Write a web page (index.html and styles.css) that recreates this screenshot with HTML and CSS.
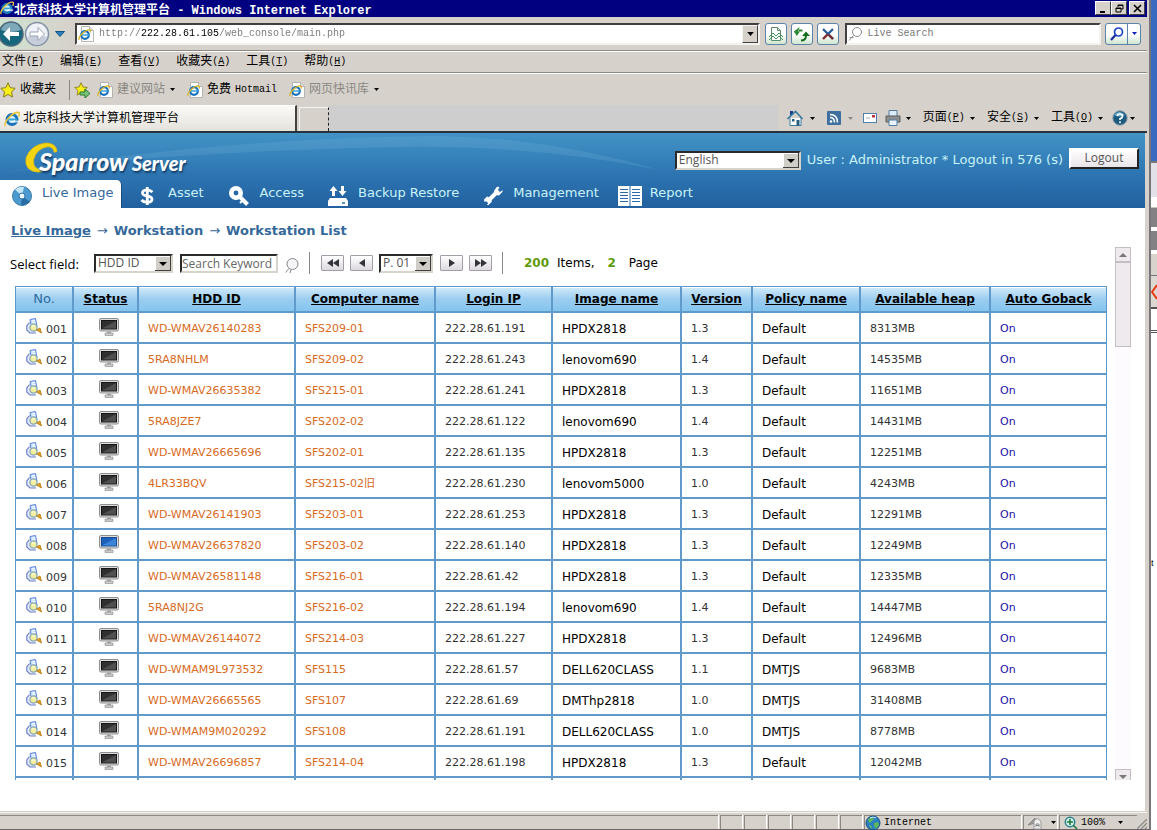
FILE: index.html
```html
<!DOCTYPE html>
<html lang="zh-CN">
<head>
<meta charset="utf-8">
<title>北京科技大学计算机管理平台 - Windows Internet Explorer</title>
<link rel="stylesheet" href="styles.css">
</head>
<body>
<svg class="defs" aria-hidden="true">
  <symbol id="ie" viewBox="0 0 16 16"><circle cx="8" cy="8.500" r="5" fill="#d8f0fa" stroke="#1873b8" stroke-width="3"/><path d="M4 8.500h9" stroke="#39a3dc" stroke-width="2"/><path d="M9 11.500h6v-2h-6z" fill="#fff" opacity=".7"/><path d="M1.500 15C-1 12 9 0 15 1.500c1 1 .5 2.500-.5 4" fill="none" stroke="#e8c63c" stroke-width="1.600"/></symbol>
  <symbol id="iepage" viewBox="0 0 16 16"><path d="M3.500.5h8l4 4v11h-12z" fill="#fff" stroke="#b4b4b4"/><path d="M11.500.5v4h4" fill="#ddd" stroke="#b4b4b4"/><circle cx="7" cy="9" r="3.800" fill="none" stroke="#1873b8" stroke-width="2.200"/><path d="M4 9h7" stroke="#39a3dc" stroke-width="1.500"/><path d="M1 14C0 11 7 3 12 4c.8.6.5 1.500 0 2.500" fill="none" stroke="#d9b52a" stroke-width="1.300"/></symbol>
  <symbol id="caret" viewBox="0 0 5 3"><path d="M0 0h5L2.500 3z" fill="currentColor"/></symbol>
  <symbol id="star" viewBox="0 0 16 16"><path d="M8 .8l2.200 4.900 5 .6-3.700 3.500 1 5.200L8 12.400 3.500 15l1-5.200L.8 6.300l5-.6z" fill="#f7ee1c" stroke="#8a7d16"/></symbol>
  <symbol id="card" viewBox="0 0 16 16"><path d="M4 1.500L9.500.5l1.500 8-5.500 1.500z" fill="#c4e2ff" stroke="#5b82e0"/><path d="M6 3l3-.6M6.300 5l3-.6" stroke="#fff"/><path d="M3.500 4.500L.8 8v4l3.200 3h6" fill="#e6ecfa" stroke="#6c7fc8" stroke-width="1.200"/><circle cx="7.500" cy="9.500" r="3.600" fill="#f3ee9a" stroke="#86a8b8" stroke-width="1.300"/><path d="M6 8.500q1.500-1.500 3 0" fill="none" stroke="#fff"/><path d="M10.500 12l3.500-2 1.500 5z" fill="#e2a024" stroke="#b0780e" stroke-width=".8"/></symbol>
  <symbol id="pc" viewBox="0 0 20 18"><rect x=".5" y=".5" width="19" height="12.500" rx="1.500" fill="#dedede" stroke="#8e8e8e"/><rect x="2.500" y="2.500" width="15" height="8.500" fill="#303030" stroke="#161616"/><path d="M3 10.500l14-7.500v7.500z" fill="#505050"/><path d="M8 13.500h4v2H8z" fill="#a5a5a5"/><path d="M6 15h8v2.500H6z" fill="#c9c9c9" stroke="#8a8a8a" stroke-width=".6"/></symbol>
  <symbol id="pcon" viewBox="0 0 20 18"><rect x=".5" y=".5" width="19" height="12.500" rx="1.500" fill="#dedede" stroke="#8e8e8e"/><rect x="2.500" y="2.500" width="15" height="8.500" fill="#1f62ba" stroke="#174a92"/><path d="M3 10.500l14-7.500v7.500z" fill="#3b86d9"/><path d="M8 13.500h4v2H8z" fill="#a5a5a5"/><path d="M6 15h8v2.500H6z" fill="#c9c9c9" stroke="#8a8a8a" stroke-width=".6"/></symbol>
  <symbol id="globe" viewBox="0 0 16 16"><circle cx="8" cy="8" r="7" fill="#2b7fc2" stroke="#17507f"/><path d="M3 4l4-2 2 2-3 3-2 1zM9 8l4-1 1 3-3 4-2-3zM4 10l3 1-1 3z" fill="#5cb85a"/><path d="M5 3q3-2 6 0" stroke="#bfe3fa" fill="none"/></symbol>
</svg>
<div class="desktop">
<div class="window">
  <div class="titlebar">
    <svg class="ic14"><use href="#ie"/></svg>
    <h1 class="title">北京科技大学计算机管理平台<span class="title-app"> - Windows Internet Explorer</span></h1>
    <div class="winbtns">
      <button aria-label="最小化"><svg viewBox="0 0 9 9"><path d="M1 8h5" stroke="#000" stroke-width="2"/></svg></button>
      <button aria-label="还原"><svg viewBox="0 0 9 9"><path d="M3 3V1h5v4H6M3 1.500h5M1 4h5v4H1zM1 4.500h5" fill="none" stroke="#000"/></svg></button>
      <button aria-label="关闭" class="close"><svg viewBox="0 0 9 9"><path d="M1 1l7 7M8 1L1 8" stroke="#000" stroke-width="1.600"/></svg></button>
    </div>
  </div>

  <div class="addressrow">
    <div class="history">
      <button aria-label="后退"><svg class="ic26" viewBox="0 0 26 26"><circle cx="13" cy="13" r="12" fill="#14677d" stroke="#50697c" stroke-width="1.500"/><path d="M3 9a10.500 10.500 0 0 1 20 0q-10 4-20 0z" fill="#7fa9b8"/><path d="M12 6l-7 7 7 7v-5h9v-4h-9z" fill="#fff"/></svg></button>
      <button aria-label="前进"><svg class="ic26" viewBox="0 0 26 26"><circle cx="13" cy="13" r="11.500" fill="#eef1f5" stroke="#8492a6" stroke-width="1.500"/><path d="M3 16q10-4 20 0-3 8-10 8T3 16z" fill="#c6cedb"/><path d="M14 6.500l6.500 6.500-6.500 6.500V15H6v-4h8z" fill="#fff" stroke="#98a4b8"/></svg></button>
      <button aria-label="最近的页面"><svg class="recent" viewBox="0 0 10 6"><path d="M.5.500h9L5 5.500z" fill="#2a7fc0" stroke="#155380"/></svg></button>
    </div>
    <div class="address">
      <svg class="ic16"><use href="#iepage"/></svg>
      <input class="url" aria-label="地址" value="http://222.28.61.105/web_console/main.php">
      <button class="dropbtn" aria-label="显示地址列表"><svg class="dropmark"><use href="#caret"/></svg></button>
    </div>
    <button class="toolbtn" aria-label="兼容性视图"><svg class="ic16" viewBox="0 0 16 16"><path d="M3.500 1.500h6l3 3v10h-9z" fill="#fff" stroke="#5e8b68"/><path d="M9.500 1.500v3h3" fill="none" stroke="#5e8b68"/><path d="M1 11l4-4 3 3 3-3 4 4M1 14l4-4 3 3 3-3 4 4" fill="none" stroke="#47915a"/></svg></button>
    <button class="toolbtn" aria-label="刷新"><svg class="ic16" viewBox="0 0 16 16"><path d="M5 4.500h3.500" stroke="#2b8a32" stroke-width="2"/><path d="M5.500 1L3 10 0 5.500z" fill="#2b8a32"/><path d="M0 5.500h6L3 9.500z" fill="#2b8a32"/><path d="M7 14.500q5 0 5-5" fill="none" stroke="#176e1e" stroke-width="2"/><path d="M8 10h8l-4-4.500z" fill="#176e1e"/></svg></button>
    <button class="toolbtn" aria-label="停止"><svg class="ic16" viewBox="0 0 16 16"><path d="M3 3l10 10" stroke="#28609a" stroke-width="2.400"/><path d="M13 3L8 8" stroke="#28609a" stroke-width="2.400"/><path d="M8 8l-5 5M9 9l4 4" stroke="#7e2a2e" stroke-width="2.400"/></svg></button>
    <div class="search">
      <svg class="ic16" viewBox="0 0 16 16"><circle cx="10" cy="6" r="4.500" fill="none" stroke="#8c8c8c"/><path d="M6.500 9.500L2 14.500M2.500 11.500h4" stroke="#8c8c8c"/></svg>
      <input class="searchbox" aria-label="Live Search" placeholder="Live Search">
    </div>
    <div class="searchgo">
      <button aria-label="搜索"><svg class="ic16" viewBox="0 0 16 16"><circle cx="9.500" cy="6" r="4" fill="#fff" stroke="#1d46c8" stroke-width="1.700"/><path d="M6.500 9L2 14" stroke="#1a2f9c" stroke-width="2.200"/></svg></button>
      <button aria-label="搜索选项"><svg class="caret blue"><use href="#caret"/></svg></button>
    </div>
  </div>

  <nav class="menubar" aria-label="菜单">
    <button>文件<span>(<u>F</u>)</span></button><button>编辑<span>(<u>E</u>)</span></button><button>查看<span>(<u>V</u>)</span></button><button>收藏夹<span>(<u>A</u>)</span></button><button>工具<span>(<u>T</u>)</span></button><button>帮助<span>(<u>H</u>)</span></button>
  </nav>

  <div class="favbar">
    <button class="fav first"><svg class="ic16"><use href="#star"/></svg>收藏夹</button>
    <button class="addfav" aria-label="添加到收藏夹栏"><svg class="ic16" viewBox="0 0 16 16"><use href="#star" width="14" height="14"/><path d="M6 10h5V7l5 4.500L11 16v-3H6z" fill="#7cc47a" stroke="#257a30"/></svg></button>
    <a class="fav dim" href="#"><svg class="ic16"><use href="#iepage"/></svg>建议网站<svg class="caret"><use href="#caret"/></svg></a>
    <a class="fav" href="#"><svg class="ic16"><use href="#iepage"/></svg>免费 <span>Hotmail</span></a>
    <a class="fav dim" href="#"><svg class="ic16"><use href="#iepage"/></svg>网页快讯库<svg class="caret"><use href="#caret"/></svg></a>
  </div>

  <div class="tabrow">
    <div class="tab"><svg class="ic16"><use href="#ie"/></svg>北京科技大学计算机管理平台</div>
    <button class="newtab" aria-label="新选项卡"></button>
    <div class="tabfill"></div>
    <div class="commands">
      <button aria-label="主页"><svg class="ic16" viewBox="0 0 16 16"><path d="M3 8v7.500h11V8" fill="#fff" stroke="#3b7ba0"/><path d="M3 1h3v4H3z" fill="#1a3a90"/><path d="M.5 9L8.500 1.500 15.500 9" fill="none" stroke="#3b7ba0" stroke-width="1.600"/><path d="M9.500 10h3v5.500h-3z" fill="#2a5e80"/><path d="M5 9h2.500v2.500H5z" fill="#2a5e80"/></svg><svg class="caret"><use href="#caret"/></svg></button>
      <button class="off" aria-label="源"><svg class="ic14" viewBox="0 0 14 14"><rect width="14" height="14" rx="1" fill="#3f6f9e"/><circle cx="4" cy="10.500" r="1.300" fill="#fff"/><path d="M3 6.500q4.500 0 4.500 5M3 3.500q7.500 0 7.500 8" fill="none" stroke="#fff" stroke-width="1.500"/></svg><svg class="caret"><use href="#caret"/></svg></button>
      <button aria-label="阅读邮件"><svg class="ic14" viewBox="0 0 14 14"><rect x=".5" y="2.500" width="13" height="9" fill="#fff" stroke="#4e7fa8"/><path d="M9 4h3v2.500H9z" fill="#b83245"/><path d="M3 7h4" stroke="#aaa"/></svg></button>
      <button aria-label="打印"><svg class="ic16" viewBox="0 0 16 16"><path d="M4 .5h8V7H4z" fill="#d9ecfa" stroke="#587a9a"/><path d="M1 6h14v6H1z" fill="#8e8e8e" stroke="#5a5a5a"/><path d="M4 10h8v5.500H4z" fill="#eef6fc" stroke="#4e7fa8"/></svg><svg class="caret"><use href="#caret"/></svg></button>
      <button>页面<span>(<u>P</u>)</span><svg class="caret"><use href="#caret"/></svg></button>
      <button>安全<span>(<u>S</u>)</span><svg class="caret"><use href="#caret"/></svg></button>
      <button>工具<span>(<u>O</u>)</span><svg class="caret"><use href="#caret"/></svg></button>
      <button class="help" aria-label="帮助"><svg class="ic16" viewBox="0 0 16 16"><circle cx="8" cy="8" r="7.200" fill="#1c5a80" stroke="#8a9aa5"/><path d="M2 5q5-6 11 0-5 3-11 0z" fill="#6fb0d0"/><path d="M5.500 6Q5.500 4 8 4t2.500 2.200Q10.500 8 8 8.800V10" fill="none" stroke="#fff" stroke-width="1.600"/><circle cx="8" cy="12.200" r="1" fill="#fff"/></svg><svg class="caret"><use href="#caret"/></svg></button>
    </div>
  </div>

  <div class="page">
    <header class="banner">
      <svg class="swoosh" viewBox="0 0 1145 75" preserveAspectRatio="none" aria-hidden="true"><path d="M0 40Q230 4 440 3q110 2 220 34Q540 12 400 14 180 18 0 40z" fill="#8cc8e8" opacity=".16"/></svg>
      <div class="brandrow">
        <div class="logo">
          <svg class="moon" viewBox="0 0 36 34" aria-hidden="true"><path d="M34 10Q33 1 22 1 6 3 1 17q-2 14 13 15 4 0 7-2Q8 30 9 19 12 7 24 5q6 0 7 6z" fill="#f5d512" stroke="#e0b610" stroke-width=".8"/></svg>
          <span class="logo-a">Sparrow</span><span class="logo-b">Server</span>
        </div>
        <div class="session">
          <select class="lang" aria-label="Language"><option>English</option></select>
          <span>User : Administrator * Logout in 576 (s)</span>
          <button class="logout">Logout</button>
        </div>
      </div>
      <nav class="mainnav" aria-label="Main">
        <a class="on" href="#"><svg class="ic20" viewBox="0 0 20 20"><circle cx="10" cy="10" r="9.500" fill="#4b9bd0" stroke="#3d7cab"/><path d="M10 10L3 3.500Q7 0 12 1z" fill="#c5e6f7"/><path d="M10 10l8 6q-4 4-9 3z" fill="#2a6ca6"/><circle cx="10" cy="10" r="3" fill="#e9f6fd" stroke="#2f75aa"/></svg>Live Image</a>
        <a class="n2" href="#"><svg class="ic20" viewBox="0 0 20 20"><path d="M15.500 6Q13 3.800 10 3.800 5.500 4 5.500 7q0 2.300 4.700 3 4.800.8 4.800 3.300 0 3-5 3-3.500 0-5.500-2.300M10.300 1v18" fill="none" stroke="#fff" stroke-width="2.800"/></svg>Asset</a>
        <a class="n3" href="#"><svg class="ic20" viewBox="0 0 20 20"><circle cx="7" cy="7" r="4.700" fill="none" stroke="#fff" stroke-width="4.600"/><path d="M10 10l8.500 8.500" stroke="#fff" stroke-width="4"/><path d="M13 15l-2 2" stroke="#fff" stroke-width="2"/></svg>Access</a>
        <a class="n4" href="#"><svg class="ic20" viewBox="0 0 20 20"><path d="M5.500 0l4 5h-2.500v5H4V5H1.500zM14.500 10l4-5H16V0h-3v5h-2.500z" fill="#fff"/><path d="M2 12h16l2 3v5H0v-5z" fill="#fff"/><path d="M14 17h3" stroke="#2b6aab" stroke-width="1.500"/></svg>Backup Restore</a>
        <a class="n5" href="#"><svg class="ic20" viewBox="0 0 20 20"><path d="M4 16L15.500 4.500" stroke="#fff" stroke-width="4"/><path d="M14 .8l-3 4 1 4 4 .6 3.500-3.600V4l-3 2.500-2-1.500L16.500 1zM1 13.500L4 10.500l4 1.500.8 3.800L5.500 19H3.700l2.500-2.800-1.400-1.700L1.500 16z" fill="#fff"/></svg>Management</a>
        <a class="n6" href="#"><svg class="ic24" viewBox="0 0 24 20"><path d="M0 0h24v20H0z" fill="#fff"/><path d="M12 0v20M2 3.500h8M2 6.500h8M2 9.500h8M2 12.500h8M2 15.500h8M14 3.500h8M14 6.500h8M14 9.500h8M14 12.500h8M14 15.500h8" stroke="#2b6aab"/></svg>Report</a>
      </nav>
    </header>

    <nav class="crumbs" aria-label="Breadcrumb"><a href="#">Live Image</a><i>→</i><span>Workstation</span><i>→</i><span>Workstation List</span></nav>

    <div class="scroller">
      <main class="pane">
        <form class="filter">
          <label for="field">Select field:</label>
          <select id="field" class="field"><option>HDD ID</option></select>
          <input class="keyword" aria-label="Search Keyword" placeholder="Search Keyword">
          <button type="button" class="find" aria-label="Search"><svg class="ic16" viewBox="0 0 16 16"><circle cx="8.500" cy="7" r="5.500" fill="#f5f5f8" stroke="#85858d"/><path d="M5 11.500L1.500 15.500M7 13l-1 3" stroke="#85858d"/></svg></button>
          <span class="rule"></span>
          <button type="button" class="pg" aria-label="First page"><svg viewBox="0 0 12 8"><path d="M6 0v8L0 4zM12 0v8L6 4z"/></svg></button>
          <button type="button" class="pg" aria-label="Previous page"><svg viewBox="0 0 12 8"><path d="M9 0v8L3 4z"/></svg></button>
          <select class="pageno" aria-label="Page number"><option>P. 01</option></select>
          <button type="button" class="pg" aria-label="Next page"><svg viewBox="0 0 12 8"><path d="M3 0v8l6-4z"/></svg></button>
          <button type="button" class="pg" aria-label="Last page"><svg viewBox="0 0 12 8"><path d="M0 0v8l6-4zM6 0v8l6-4z"/></svg></button>
          <span class="rule"></span>
          <span class="totals"><b>200</b><span>Items,</span><b>2</b><span>Page</span></span>
        </form>
        <table class="grid">
          <colgroup><col class="c1"><col class="c2"><col class="c3"><col class="c4"><col class="c5"><col class="c6"><col class="c7"><col class="c8"><col class="c9"><col class="c10"></colgroup>
          <thead><tr><th class="no">No.</th><th><a href="#">Status</a></th><th><a href="#">HDD ID</a></th><th><a href="#">Computer name</a></th><th><a href="#">Login IP</a></th><th><a href="#">Image name</a></th><th><a href="#">Version</a></th><th><a href="#">Policy name</a></th><th><a href="#">Available heap</a></th><th><a href="#">Auto Goback</a></th></tr></thead>
          <tbody>
          <tr><td><svg><use href="#card"/></svg>001</td><td><svg><use href="#pc"/></svg></td><td><a href="#">WD-WMAV26140283</a></td><td><a href="#">SFS209-01</a></td><td>222.28.61.191</td><td>HPDX2818</td><td>1.3</td><td>Default</td><td>8313MB</td><td>On</td></tr>
          <tr><td><svg><use href="#card"/></svg>002</td><td><svg><use href="#pc"/></svg></td><td><a href="#">5RA8NHLM</a></td><td><a href="#">SFS209-02</a></td><td>222.28.61.243</td><td>lenovom690</td><td>1.4</td><td>Default</td><td>14535MB</td><td>On</td></tr>
          <tr><td><svg><use href="#card"/></svg>003</td><td><svg><use href="#pc"/></svg></td><td><a href="#">WD-WMAV26635382</a></td><td><a href="#">SFS215-01</a></td><td>222.28.61.241</td><td>HPDX2818</td><td>1.3</td><td>Default</td><td>11651MB</td><td>On</td></tr>
          <tr><td><svg><use href="#card"/></svg>004</td><td><svg><use href="#pc"/></svg></td><td><a href="#">5RA8JZE7</a></td><td><a href="#">SFS202-02</a></td><td>222.28.61.122</td><td>lenovom690</td><td>1.4</td><td>Default</td><td>14431MB</td><td>On</td></tr>
          <tr><td><svg><use href="#card"/></svg>005</td><td><svg><use href="#pc"/></svg></td><td><a href="#">WD-WMAV26665696</a></td><td><a href="#">SFS202-01</a></td><td>222.28.61.135</td><td>HPDX2818</td><td>1.3</td><td>Default</td><td>12251MB</td><td>On</td></tr>
          <tr><td><svg><use href="#card"/></svg>006</td><td><svg><use href="#pc"/></svg></td><td><a href="#">4LR33BQV</a></td><td><a href="#">SFS215-02旧</a></td><td>222.28.61.230</td><td>lenovom5000</td><td>1.0</td><td>Default</td><td>4243MB</td><td>On</td></tr>
          <tr><td><svg><use href="#card"/></svg>007</td><td><svg><use href="#pc"/></svg></td><td><a href="#">WD-WMAV26141903</a></td><td><a href="#">SFS203-01</a></td><td>222.28.61.253</td><td>HPDX2818</td><td>1.3</td><td>Default</td><td>12291MB</td><td>On</td></tr>
          <tr><td><svg><use href="#card"/></svg>008</td><td><svg><use href="#pcon"/></svg></td><td><a href="#">WD-WMAV26637820</a></td><td><a href="#">SFS203-02</a></td><td>222.28.61.140</td><td>HPDX2818</td><td>1.3</td><td>Default</td><td>12249MB</td><td>On</td></tr>
          <tr><td><svg><use href="#card"/></svg>009</td><td><svg><use href="#pc"/></svg></td><td><a href="#">WD-WMAV26581148</a></td><td><a href="#">SFS216-01</a></td><td>222.28.61.42</td><td>HPDX2818</td><td>1.3</td><td>Default</td><td>12335MB</td><td>On</td></tr>
          <tr><td><svg><use href="#card"/></svg>010</td><td><svg><use href="#pc"/></svg></td><td><a href="#">5RA8NJ2G</a></td><td><a href="#">SFS216-02</a></td><td>222.28.61.194</td><td>lenovom690</td><td>1.4</td><td>Default</td><td>14447MB</td><td>On</td></tr>
          <tr><td><svg><use href="#card"/></svg>011</td><td><svg><use href="#pc"/></svg></td><td><a href="#">WD-WMAV26144072</a></td><td><a href="#">SFS214-03</a></td><td>222.28.61.227</td><td>HPDX2818</td><td>1.3</td><td>Default</td><td>12496MB</td><td>On</td></tr>
          <tr><td><svg><use href="#card"/></svg>012</td><td><svg><use href="#pc"/></svg></td><td><a href="#">WD-WMAM9L973532</a></td><td><a href="#">SFS115</a></td><td>222.28.61.57</td><td>DELL620CLASS</td><td>1.1</td><td>DMTJS</td><td>9683MB</td><td>On</td></tr>
          <tr><td><svg><use href="#card"/></svg>013</td><td><svg><use href="#pc"/></svg></td><td><a href="#">WD-WMAV26665565</a></td><td><a href="#">SFS107</a></td><td>222.28.61.69</td><td>DMThp2818</td><td>1.0</td><td>DMTJS</td><td>31408MB</td><td>On</td></tr>
          <tr><td><svg><use href="#card"/></svg>014</td><td><svg><use href="#pc"/></svg></td><td><a href="#">WD-WMAM9M020292</a></td><td><a href="#">SFS108</a></td><td>222.28.61.191</td><td>DELL620CLASS</td><td>1.0</td><td>DMTJS</td><td>8778MB</td><td>On</td></tr>
          <tr><td><svg><use href="#card"/></svg>015</td><td><svg><use href="#pc"/></svg></td><td><a href="#">WD-WMAV26696857</a></td><td><a href="#">SFS214-04</a></td><td>222.28.61.198</td><td>HPDX2818</td><td>1.3</td><td>Default</td><td>12042MB</td><td>On</td></tr>
          <tr aria-hidden="true"><td></td><td></td><td></td><td></td><td></td><td></td><td></td><td></td><td></td><td></td></tr>
          </tbody>
        </table>
      </main>
      <div class="vbar">
        <button aria-label="Scroll up"><svg viewBox="0 0 8 4"><path d="M0 4h8L4 0z" fill="#777"/></svg></button>
        <div class="thumb"></div>
        <div class="track"></div>
        <button aria-label="Scroll down"><svg viewBox="0 0 8 4"><path d="M0 0h8L4 4z" fill="#777"/></svg></button>
      </div>
    </div>
  </div>

  <footer class="status">
    <div class="cell grow"></div><div class="cell"></div><div class="cell"></div><div class="cell"></div><div class="cell"></div><div class="cell"></div><div class="cell"></div>
    <div class="cell zone"><svg class="ic16"><use href="#globe"/></svg>Internet</div>
    <div class="cell guard"><svg class="ic16" viewBox="0 0 16 16"><path d="M1 10l7-7v5z" fill="#999" stroke="#888"/><path d="M7 6q4-5 7 1v7H7z" fill="#f0f0f0" stroke="#999"/><path d="M9 12V9h3v3M9 10.500h3" fill="none" stroke="#888"/></svg><svg class="caret"><use href="#caret"/></svg></div>
    <div class="cell zoom"><svg class="ic14" viewBox="0 0 14 14"><circle cx="6" cy="6" r="4.700" fill="#d9f2ee" stroke="#26808a" stroke-width="1.500"/><path d="M6 3v6M3 6h6M9.500 9.500l3.500 3.500" stroke="#187a3c" stroke-width="1.600"/></svg><span>100%</span><svg class="caret"><use href="#caret"/></svg></div>
    <svg class="grip" viewBox="0 0 10 10"><path d="M0 10L10 0M4 10l6-6M8 10l2-2" stroke="#8a8a86" stroke-width="1.300"/></svg>
  </footer>
</div>
<div class="behind" aria-hidden="true">
  <div class="b1"></div><div class="b2"></div><div class="b3"></div><div class="b3"></div><div class="b4"></div>
  <div class="b5"><svg viewBox="0 0 6 16"><path d="M6 1L1 8l5 7" fill="none" stroke="#e8380c" stroke-width="2"/></svg></div>
  <div class="b6"></div><div class="b7">t</div>
</div>
</div>
</body>
</html>
```
FILE: styles.css
```css
* { box-sizing: border-box; }
body { margin: 0; font: 12px/16px "Liberation Mono", "Noto Sans CJK SC", monospace; color: #000; }
button, a { font: inherit; color: inherit; }
button { border: 0; padding: 0; background: none; display: flex; align-items: center; justify-content: center; }
a { text-decoration: none; }
svg { flex: none; display: block; }
.defs { position: absolute; width: 0; height: 0; }
.ic14 { width: 14px; height: 14px; }
.ic16 { width: 16px; height: 16px; }
.ic20 { width: 20px; height: 20px; }
.ic24 { width: 24px; height: 20px; }
.ic26 { width: 26px; height: 26px; }
.caret { width: 5px; height: 3px; }
.dropmark { width: 7px; height: 4px; }
.blue { color: #0a1fc0; }

.desktop { display: flex; height: 100vh; overflow: hidden; }
.window { flex: 1; min-width: 0; display: flex; flex-direction: column; background: #d6d2cb; padding-right: 2px; border-right: 2px solid #77757a; border-bottom: 1px solid #6c6468; }

/* Browser chrome */
.titlebar { display: flex; align-items: flex-start; height: 17px; background: #000080; color: #fff; padding-right: 2px; }
.title { flex: 1; margin: 0; font: bold 12px/18px "Noto Sans CJK SC", sans-serif; white-space: pre; }
.title-app { font-family: "Liberation Mono", monospace; }
.titlebar svg { margin-top: 1px; }
.winbtns { display: flex; margin-top: 1px; }
.winbtns button { width: 16px; height: 14px; background: #d6d2cb; border: 1px solid; border-color: #fff #404040 #404040 #fff; }
.winbtns .close { margin-left: 2px; }
.winbtns svg { width: 9px; height: 9px; margin: 0; }

.addressrow { display: flex; align-items: center; gap: 4px; height: 34px; padding-right: 6px; border-bottom: 1px solid #8c8983; }
.history { display: flex; align-items: center; width: 71px; height: 30px; background: linear-gradient(90deg, #cfe3d0, #d6d2cb); }
.history button:first-child { margin-left: -2px; }
.recent { width: 10px; height: 6px; margin-left: 5px; }
.address, .search { display: flex; align-items: center; height: 22px; background: #fff; border: 2px solid; border-color: #404040 #f4f2ee #f4f2ee #404040; }
.address { flex: 687; padding-left: 1px; min-width: 0; margin-right: 1px; }
.search { flex: 254; min-width: 0; margin-left: 2px; }
.address input, .search input { flex: 1; min-width: 0; border: 0; padding: 0; outline: 0; font: 10px/16px "Liberation Mono", monospace; }
.url { margin-left: 5px; color: #777; -webkit-text-fill-color: transparent; background: linear-gradient(90deg, #777 42px, #000 42px, #000 120px, #777 120px); -webkit-background-clip: text; background-clip: text; }
.search input { background: none; margin-left: 4px; }
.search input::placeholder { color: #777; }
.dropbtn { width: 16px; height: 18px; background: #d6d2cb; border: 1px solid; border-color: #f6f4f0 #404040 #404040 #f6f4f0; }
.toolbtn { width: 22px; height: 22px; border: 1px solid #5b84a8; border-radius: 3px; background: linear-gradient(#fff 50%, #cfe6cf); }
.searchgo { display: flex; height: 22px; border: 1px solid #5b84a8; border-radius: 3px; background: linear-gradient(#fff 50%, #cfe6cf); }
.searchgo button { width: 21px; }
.searchgo button + button { width: 13px; border-left: 1px solid #5b84a8; }

.menubar span, .commands span, .fav span { font: 10px/16px "Liberation Mono", monospace; }
.menubar { display: flex; align-items: center; gap: 16px; height: 22px; padding-left: 2px; border-top: 1px solid #fff; border-bottom: 1px solid #8c8983; }
.favbar { display: flex; align-items: center; height: 32px; border-top: 1px solid #fff; }
.fav { display: flex; align-items: center; gap: 4px; margin-right: 12px; }
.fav .caret { color: #000; margin-left: 1px; }
.fav.dim { color: #8a8782; }
.fav.first { height: 20px; padding-right: 13px; margin-right: 4px; border-right: 1px solid #8c8983; }
.addfav { margin-right: 7px; }
.tabrow { display: flex; height: 28px; border-bottom: 2px solid #26323c; }
.tab { display: flex; align-items: center; gap: 3px; width: 297px; padding-left: 4px; background: linear-gradient(#fbfaf7, #e4e2db); border-right: 2px solid #44423e; border-top: 1px solid #fff; }
.newtab { width: 30px; margin: 2px 0 0 2px; border: 1px solid #f4f2ee; border-right: 1px dashed #222; border-bottom: 0; }
.tabfill { flex: 1; background: #cecece; }
.commands { display: flex; align-items: center; gap: 12px; padding: 0 12px 0 9px; }
.commands button { height: 24px; }
.commands .caret { margin-left: 5px; }
.commands button:first-child .caret, .commands .off .caret { margin-left: 7px; }
.commands .help .caret { margin-left: 2px; }
.commands button.help { margin-left: -3px; }
.commands .off .caret { color: #8a8782; margin-right: -2px; }
.commands .off + button { margin-right: -4px; }

/* Console page */
.page { flex: 1; min-height: 0; display: flex; flex-direction: column; background: #fff; margin-right: 2px; padding-bottom: 31px; font-family: "DejaVu Sans", "Noto Sans CJK SC", sans-serif; }
.banner { position: relative; display: flex; flex-direction: column; height: 75px; background: linear-gradient(#4293c6, #2d75b2 55%, #22609f); color: #c9f3f8; font-size: 13px; }
.swoosh { position: absolute; inset: 0; width: 100%; height: 100%; }
.brandrow { position: relative; display: flex; justify-content: space-between; height: 47px; padding: 9px 6px 0 24px; }
.logo { display: flex; align-items: baseline; height: 34px; font: italic 900 25px/38px Lato, sans-serif; color: #fff; text-shadow: 1px 2px 2px #143c68; }
.moon { width: 36px; height: 32px; align-self: flex-start; }
.logo-a { position: relative; margin-left: -21px; }
.logo-b { font-size: 20px; margin-left: 4px; }
.session { display: flex; align-items: center; gap: 6px; height: 36px; font-size: 13px; }
select, .keyword { appearance: none; border-radius: 0; color: #555; background-color: #fff; border: 2px solid; border-color: #2a2a2a #d8d4cc #d8d4cc #2a2a2a; margin: 0; padding: 0 2px; font: 12px/14px "Open Sans", sans-serif; height: 19px; }
select { background-repeat: no-repeat; background-position: right center; background-image: url("data:image/svg+xml,%3Csvg xmlns='http://www.w3.org/2000/svg' width='16' height='15'%3E%3Cpath d='M0 0h16v15H0z' fill='%23404040'/%3E%3Cpath d='M0 0h15v14H0z' fill='%23fff'/%3E%3Cpath d='M1 1h14v13H1z' fill='%23d0ccc6'/%3E%3Cpath d='M4 6h8l-4 4z' fill='%23000'/%3E%3C/svg%3E"); }
.lang { width: 126px; }
.logout { width: 70px; height: 21px; margin-bottom: 4px; font: 12px/16px "Open Sans", sans-serif; color: #555; background: linear-gradient(#fff, #e9e4e8); border: 2px solid; border-color: #fff #222 #222 #fff; }
.mainnav { position: relative; display: flex; height: 28px; }
.mainnav a { display: flex; gap: 11px; line-height: 26px; align-items: flex-start; }
.mainnav svg { margin-top: 6px; }
.mainnav .on { width: 122px; padding-left: 12px; gap: 10px; background: #fff; color: #34699c; border-top-right-radius: 5px; border-right: 1px solid #1b4c80; }
.mainnav .n2 { margin-left: 15px; }
.mainnav .n3 { margin-left: 25px; }
.mainnav .n4 { margin-left: 24px; gap: 10px; }
.mainnav .n5 { margin-left: 24px; gap: 10px; }
.mainnav .n6 { margin-left: 19px; gap: 8px; }

.crumbs { display: flex; gap: 6px; height: 39px; align-items: center; padding: 6px 0 0 11px; font-size: 13px; font-weight: bold; color: #35699a; }
.crumbs a { text-decoration: underline; }
.crumbs i { font-style: normal; font-weight: normal; }
.scroller { flex: 1; min-height: 0; display: flex; overflow: hidden; padding-right: 14px; }
.pane { flex: 1; min-width: 0; overflow: hidden; padding: 0 9px 0 15px; }
.filter { display: flex; align-items: center; height: 39px; margin-left: -5px; padding-bottom: 7px; font-size: 12px; }
.filter label { width: 84px; font: 13px/16px "Open Sans", sans-serif; margin-top: 2px; }
.field { width: 79px; margin-right: 7px; }
.keyword { width: 98px; padding: 0; }
.keyword::placeholder { color: #666; }
.find { margin: 4px 0 0 6px; }
.rule { width: 1px; height: 22px; margin: 0 11px 0 9px; background: #888; }
.pg { width: 23px; height: 16px; margin-right: 6px; border: 1px solid #a29da6; border-radius: 1px; background: linear-gradient(#fff, #ddd8df); }
.pg svg { width: 12px; height: 8px; fill: #33333c; }
.pageno { width: 54px; margin-right: 7px; }
.pg + .rule { margin: 0 21px 0 4px; }
.totals { display: flex; gap: 8px; }
.totals b { color: #5e9a0a; }
.totals span + b { margin-left: 5px; }
.totals b + span:last-child { margin-left: 5px; }

.grid { width: 100%; table-layout: fixed; border-collapse: separate; border-spacing: 0; border: 1px solid #5d98cb; font-size: 11px; line-height: 16px; color: #333; }
.c1 { width: 58px; } .c2 { width: 65px; } .c3 { width: 157px; } .c4 { width: 140px; } .c5 { width: 117px; }
.c6 { width: 129px; } .c7 { width: 71px; } .c8 { width: 108px; } .c9 { width: 130px; } .c10 { width: 115px; }
.grid th { height: 26px; padding: 0; border: solid #5f9acb; border-width: 0 2px 2px 0; font-size: 12px; color: #000; background: linear-gradient(#d2ecfa, #9ccdf0 50%, #84c5ee); box-shadow: inset 0 1px #fff; }
.grid th a { text-decoration: underline; }
.grid .no { font-weight: normal; font-size: 13px; color: #2e6ca4; }
.grid td { height: 31px; padding: 2px 0 0 9px; border: solid #5f9acb; border-width: 0 2px 2px 0; white-space: nowrap; }
.grid th:last-child, .grid td:last-child { border-right: 0; }
.grid td a { color: #d86a1c; }
.grid td:first-child { padding: 0 0 0 10px; }
.grid td:first-child svg { display: inline-block; width: 16px; height: 16px; margin-right: 4px; vertical-align: -1px; }
.grid td:nth-child(2) { padding: 0 0 2px 6px; }
.grid td:nth-child(2) svg { width: 20px; height: 18px; margin: 0 auto; }
.grid td:nth-child(6), .grid td:nth-child(8) { font-size: 12px; color: #000; }
.grid td:last-child { color: #1c10a8; }

.vbar { width: 16px; display: flex; flex-direction: column; margin-bottom: -4px; background: #fdfbfd; }
.vbar button, .thumb { border: 1px solid #c4bec4; background: #eeeaee; }
.vbar button { height: 15px; }
.vbar svg { width: 8px; height: 4px; }
.thumb { height: 85px; }
.track { flex: 1; }

/* Status bar */
.status { display: flex; height: 17px; padding-top: 2px; border-top: 1px solid #f4f2ee; font-size: 10px; margin-top: 1px; }
.cell { display: flex; align-items: center; gap: 3px; width: 22px; margin-right: 2px; border-left: 1px solid #8c8983; border-top: 1px solid #8c8983; box-shadow: 1px 0 #fff; }
.cell.grow { flex: 1; border-left: 0; }
.cell.zone { width: 157px; font: 10px/12px "Liberation Mono", monospace; }
.cell.guard { width: 34px; gap: 8px; padding-left: 3px; }
.cell.zoom { width: 78px; padding-left: 4px; margin-right: 0; box-shadow: none; }
.cell.zoom .caret { margin-left: 10px; }
.grip { width: 10px; height: 10px; align-self: flex-end; }

/* Strip of the desktop to the right of the window */
.behind { width: 6px; display: flex; flex-direction: column; background: #fff; overflow: hidden; }
.b1 { height: 163px; background: #3a69c0; border-bottom: 2px solid #777; }
.b2 { height: 45px; background: linear-gradient(#e3e1e8 34px, #fff 34px); border-bottom: 1px solid #c8c4bc; }
.b3 { height: 19px; margin-bottom: 4px; background: #838183; }
.b4 { height: 22px; background: #d8d4cc; border-bottom: 1px solid #77757a; }
.b5 { height: 33px; padding-top: 8px; background: #dcd9d2; border-bottom: 2px solid #555; }
.b5 svg { width: 6px; height: 16px; }
.b6 { height: 24px; border-bottom: 3px double #555; }
.b7 { padding-top: 224px; font: 10px/12px "Liberation Serif", serif; }
```
